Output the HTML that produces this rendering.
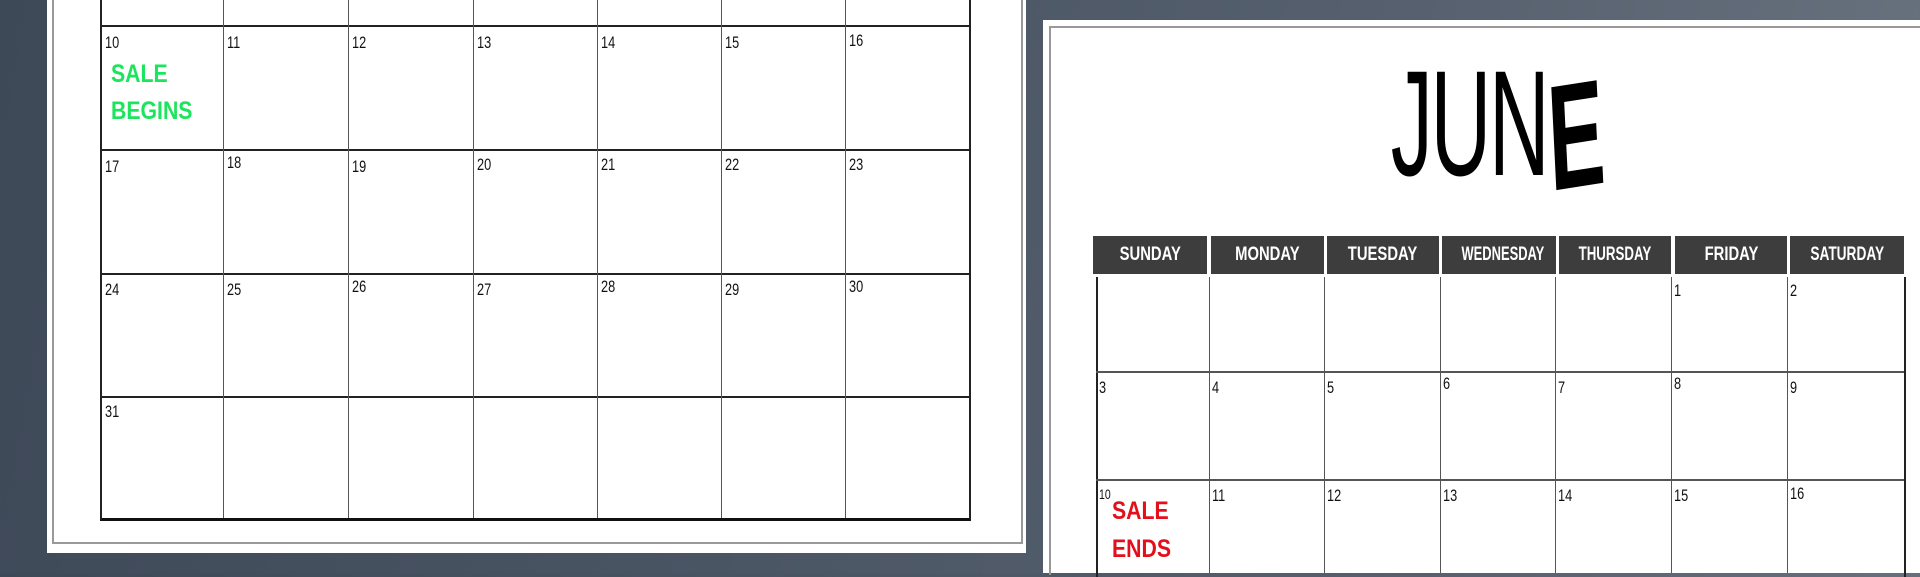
<!DOCTYPE html>
<html><head><style>
body{margin:0;width:1920px;height:573px;overflow:hidden;position:relative;font-family:"Liberation Sans",sans-serif;
background:linear-gradient(100deg,#3e4958 0%,#4a5564 40%,#56606e 70%,#6a7380 100%);}
.abs{position:absolute}
.num{position:absolute;font-size:17px;color:#111;transform:scaleX(0.75);transform-origin:left top}
.vl{position:absolute;width:1px;background:#555}
.hl{position:absolute;height:2px;background:#222}
.hd{position:absolute;top:236px;height:38px;background:#3d3d3d;color:#fff;font-weight:bold;font-size:19px;line-height:38px;text-align:center;overflow:hidden;white-space:nowrap}
.hd span{display:inline-block;transform:scaleX(0.78)}
</style></head><body>
<div class="abs" style="left:47px;top:0;width:979px;height:553px;background:#fff"></div>
<div class="abs" style="left:52px;top:-3px;width:967px;height:545px;border:2px solid #999;border-top:none"></div>
<div class="abs" style="left:100px;top:0;width:867px;height:518px;border-left:2px solid #222;border-right:2px solid #222;border-bottom:3px solid #111"></div>
<div class="hl" style="left:100px;top:25px;width:869px"></div>
<div class="hl" style="left:100px;top:149px;width:869px"></div>
<div class="hl" style="left:100px;top:273px;width:869px"></div>
<div class="hl" style="left:100px;top:396px;width:869px"></div>
<div class="vl" style="left:223px;top:0;height:518px"></div>
<div class="vl" style="left:348px;top:0;height:518px"></div>
<div class="vl" style="left:473px;top:0;height:518px"></div>
<div class="vl" style="left:597px;top:0;height:518px"></div>
<div class="vl" style="left:721px;top:0;height:518px"></div>
<div class="vl" style="left:845px;top:0;height:518px"></div>
<div class="num" style="left:105px;top:33px">10</div>
<div class="abs" style="left:111px;top:56px;color:#1be55c;font-weight:bold;font-size:25px;line-height:37px;transform:scaleX(0.85);transform-origin:left top">SALE<br>BEGINS</div>
<div class="num" style="left:227px;top:33px">11</div><div class="num" style="left:352px;top:33px">12</div><div class="num" style="left:477px;top:33px">13</div><div class="num" style="left:601px;top:33px">14</div><div class="num" style="left:725px;top:33px">15</div><div class="num" style="left:849px;top:31px">16</div>
<div class="num" style="left:105px;top:157px">17</div><div class="num" style="left:227px;top:153px">18</div><div class="num" style="left:352px;top:157px">19</div><div class="num" style="left:477px;top:155px">20</div><div class="num" style="left:601px;top:155px">21</div><div class="num" style="left:725px;top:155px">22</div><div class="num" style="left:849px;top:155px">23</div>
<div class="num" style="left:105px;top:280px">24</div><div class="num" style="left:227px;top:280px">25</div><div class="num" style="left:352px;top:277px">26</div><div class="num" style="left:477px;top:280px">27</div><div class="num" style="left:601px;top:277px">28</div><div class="num" style="left:725px;top:280px">29</div><div class="num" style="left:849px;top:277px">30</div>
<div class="num" style="left:105px;top:402px">31</div>
<div class="abs" style="left:1043px;top:20px;width:877px;height:553px;background:#fff"></div>
<div class="abs" style="left:1049px;top:26px;width:871px;height:547px;border-left:2px solid #999;border-top:2px solid #999"></div>
<div class="abs" style="left:1296px;top:48px;width:400px;text-align:center;white-space:nowrap;font-size:150px;line-height:150px;color:#000;transform:scaleX(0.56);letter-spacing:-4px">JUN<span style="font-weight:bold;display:inline-block;transform:rotate(-5deg) translateY(12px)">E</span></div>
<div class="hd" style="left:1093px;width:114px"><span>SUNDAY</span></div>
<div class="hd" style="left:1211px;width:113px"><span>MONDAY</span></div>
<div class="hd" style="left:1327px;width:112px"><span>TUESDAY</span></div>
<div class="hd" style="left:1442px;width:114px"><span style="transform:scaleX(0.68)">WEDNESDAY</span></div>
<div class="hd" style="left:1559px;width:112px"><span style="transform:scaleX(0.7)">THURSDAY</span></div>
<div class="hd" style="left:1675px;width:112px"><span>FRIDAY</span></div>
<div class="hd" style="left:1790px;width:114px"><span style="transform:scaleX(0.72)">SATURDAY</span></div>
<div class="abs" style="left:1096px;top:277px;width:806px;height:300px;border-left:2px solid #222;border-right:2px solid #222"></div>
<div class="hl" style="left:1096px;top:371px;width:808px;background:#555"></div>
<div class="hl" style="left:1096px;top:479px;width:808px;background:#555"></div>
<div class="vl" style="left:1209px;top:277px;height:296px"></div>
<div class="vl" style="left:1324px;top:277px;height:296px"></div>
<div class="vl" style="left:1440px;top:277px;height:296px"></div>
<div class="vl" style="left:1555px;top:277px;height:296px"></div>
<div class="vl" style="left:1671px;top:277px;height:296px"></div>
<div class="vl" style="left:1787px;top:277px;height:296px"></div>
<div class="num" style="left:1674px;top:281px">1</div><div class="num" style="left:1790px;top:281px">2</div>
<div class="num" style="left:1099px;top:378px">3</div><div class="num" style="left:1212px;top:378px">4</div><div class="num" style="left:1327px;top:378px">5</div><div class="num" style="left:1443px;top:374px">6</div><div class="num" style="left:1558px;top:378px">7</div><div class="num" style="left:1674px;top:374px">8</div><div class="num" style="left:1790px;top:378px">9</div>
<div class="num" style="left:1099px;top:486px;font-size:14px">10</div>
<div class="abs" style="left:1112px;top:492px;color:#e3101c;font-weight:bold;font-size:25px;line-height:38px;transform:scaleX(0.85);transform-origin:left top">SALE<br>ENDS</div>
<div class="num" style="left:1212px;top:486px">11</div><div class="num" style="left:1327px;top:486px">12</div><div class="num" style="left:1443px;top:486px">13</div><div class="num" style="left:1558px;top:486px">14</div><div class="num" style="left:1674px;top:486px">15</div><div class="num" style="left:1790px;top:484px">16</div>
</body></html>
